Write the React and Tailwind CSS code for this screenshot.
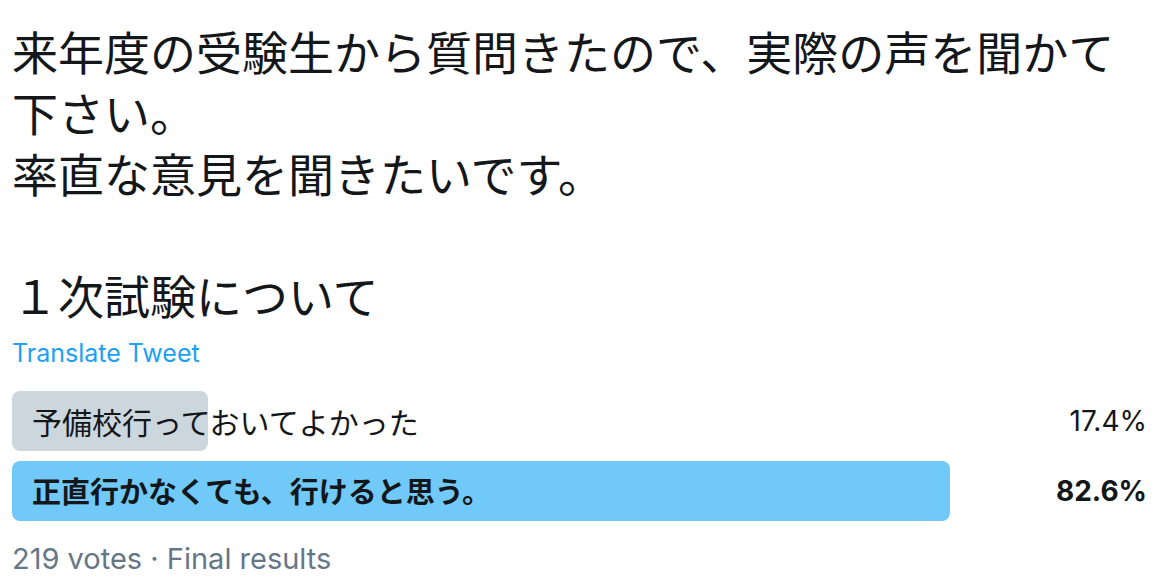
export default function App() {
  return (
    <div className="w-[1174px] h-[580px] bg-white overflow-hidden text-[#14171a]">
      <div className="pl-[12px] pt-[20px]">
        <div className="w-[1120px] text-[46px] leading-[61px] font-['Noto_Sans_CJK_JP',sans-serif]">
          <p>来年度の受験生から質問きたので、実際の声を聞かて下さい。</p>
          <p>率直な意見を聞きたいです。</p>
          <p>&nbsp;</p>
          <p>１次試験について</p>
        </div>
        <div className="mt-[12px] text-[25px] leading-[32px] text-[#1da1f2] font-['Inter',sans-serif]">
          Translate Tweet
        </div>
        <div className="mt-[22px] flex flex-col gap-[10px] pr-[27px]">
          <div className="relative h-[60px] flex items-center">
            <div className="absolute left-0 top-0 h-[60px] w-[196px] rounded-[8px] bg-[#ccd6dd]" />
            <div className="relative flex-1 pl-[20px] text-[30px] font-['Noto_Sans_CJK_JP',sans-serif]">
              予備校行っておいてよかった
            </div>
            <div className="relative text-[28px] font-['Inter',sans-serif]">17.4%</div>
          </div>
          <div className="relative h-[60px] flex items-center">
            <div className="absolute left-0 top-0 h-[60px] w-[938px] rounded-[8px] bg-[#71c9f8]" />
            <div className="relative flex-1 pl-[20px] text-[29px] font-bold font-['Noto_Sans_CJK_JP',sans-serif]">
              正直行かなくても、行けると思う。
            </div>
            <div className="relative text-[28px] font-bold font-['Inter',sans-serif]">82.6%</div>
          </div>
        </div>
        <div className="mt-[21px] text-[29px] leading-[34px] text-[#657786] font-['Inter',sans-serif]">
          219 votes · Final results
        </div>
      </div>
    </div>
  );
}
